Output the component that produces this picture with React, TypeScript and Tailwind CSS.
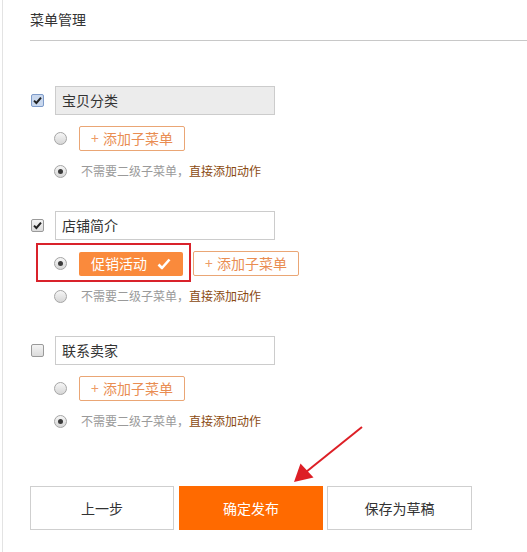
import React from "react";

const font = { fontFamily: '"Microsoft YaHei", "Noto Sans CJK SC", "Noto Sans", sans-serif' };

function Checkbox({ checked, focus }: { checked: boolean; focus?: boolean }) {
  return (
    <span
      className={
        "flex h-[13px] w-[13px] shrink-0 items-center justify-center rounded-[2px] border " +
        (focus
          ? "border-[#7e9bc9] bg-[#c9d8ee]"
          : "border-[#9a9a9a] bg-gradient-to-b from-[#f4f4f4] to-[#dcdcdc]")
      }
    >
      {checked && (
        <svg width="9" height="9" viewBox="0 0 9 9">
          <path d="M1 4.6 L3.4 7 L8 1.6" fill="none" stroke="#222" strokeWidth="2" />
        </svg>
      )}
    </span>
  );
}

function Radio({ checked }: { checked: boolean }) {
  return (
    <span className="flex h-[13px] w-[13px] shrink-0 items-center justify-center rounded-full border border-[#a5a5a5] bg-gradient-to-b from-[#f6f6f6] to-[#d6d6d6]">
      {checked && <span className="h-[5px] w-[5px] rounded-full bg-[#3a3a3a]" />}
    </span>
  );
}

function AddButton() {
  return (
    <span className="flex h-[25px] w-[106px] items-center justify-center rounded-[2px] border border-[#eaa675] bg-white text-[14px] text-[#e98d52]">
      <span className="mr-[4px] text-[#ee9c68]">+</span>添加子菜单
    </span>
  );
}

function Hint({ checked }: { checked: boolean }) {
  return (
    <div className="mt-[10px] flex h-[20px] items-center">
      <span className="ml-[24px]">
        <Radio checked={checked} />
      </span>
      <span className="ml-[14px] text-[12px] text-[#9a9a9a]">
        不需要二级子菜单，<span className="text-[#8a4a10]">直接添加动作</span>
      </span>
    </div>
  );
}

function Group({
  label,
  checked,
  focus,
  disabled,
  children,
  hintChecked,
}: {
  label: string;
  checked: boolean;
  focus?: boolean;
  disabled?: boolean;
  children: React.ReactNode;
  hintChecked: boolean;
}) {
  return (
    <div className="flex flex-col">
      <div className="flex h-[29px] items-center">
        <span className="ml-[1px]">
          <Checkbox checked={checked} focus={focus} />
        </span>
        <div
          className={
            "ml-[11px] flex h-[29px] w-[220px] items-center border border-[#cccccc] pl-[6px] text-[14px] text-[#333] " +
            (disabled ? "bg-[#ececec]" : "bg-white")
          }
        >
          {label}
        </div>
      </div>
      {children}
      <Hint checked={hintChecked} />
    </div>
  );
}

export default function App() {
  return (
    <div className="min-h-screen bg-white" style={font}>
      <div className="relative ml-[2px] min-h-[552px] border-l border-[#e3e3e3] pl-[27px]">
        <div className="flex h-[41px] items-center border-b border-[#c8c8c8] pb-[1px] text-[14px] text-[#333]">
          菜单管理
        </div>

        <div className="mt-[45px] flex flex-col gap-[30px]">
          <Group label="宝贝分类" checked focus disabled hintChecked>
            <div className="mt-[11px] flex h-[25px] items-center">
              <span className="ml-[24px]">
                <Radio checked={false} />
              </span>
              <span className="ml-[12px]">
                <AddButton />
              </span>
            </div>
          </Group>

          <Group label="店铺简介" checked hintChecked={false}>
            <div className="relative mt-[11px] flex h-[25px] items-center">
              <span className="ml-[24px]">
                <Radio checked />
              </span>
              <span className="ml-[12px] flex h-[24px] w-[104px] items-center justify-center rounded-[2px] bg-[#fa8a3c] text-[14px] text-white">
                促销活动
                <svg className="ml-[10px]" width="14" height="12" viewBox="0 0 14 12">
                  <path d="M1.5 6.5 L5 10 L12.5 1.5" fill="none" stroke="#fff" strokeWidth="2.6" strokeLinejoin="round" />
                </svg>
              </span>
              <span className="ml-[10px]">
                <AddButton />
              </span>
              <span className="pointer-events-none absolute left-[6px] top-[-8px] h-[39px] w-[155px] border-2 border-[#d9222b]" />
            </div>
          </Group>

          <Group label="联系卖家" checked={false} hintChecked>
            <div className="mt-[11px] flex h-[25px] items-center">
              <span className="ml-[24px]">
                <Radio checked={false} />
              </span>
              <span className="ml-[12px]">
                <AddButton />
              </span>
            </div>
          </Group>
        </div>

        <div className="mt-[55px] flex text-[14px]">
          <button className="h-[44px] w-[144px] border border-[#cfcfcf] bg-white text-[#333]">上一步</button>
          <button className="ml-[5px] h-[44px] w-[144px] bg-[#ff6a00] text-white">确定发布</button>
          <button className="ml-[4px] h-[44px] w-[145px] border border-[#cfcfcf] bg-white text-[#333]">保存为草稿</button>
        </div>

        <svg className="pointer-events-none absolute left-0 top-0" width="527" height="552" viewBox="-3 0 527 552" style={{ marginLeft: -3 }}>
          <line x1="359" y1="427" x2="303" y2="472" stroke="#dd1f26" strokeWidth="2" />
          <polygon points="291,482 297.5,463.5 310.5,477.5" fill="#dd1f26" />
        </svg>
      </div>
    </div>
  );
}
